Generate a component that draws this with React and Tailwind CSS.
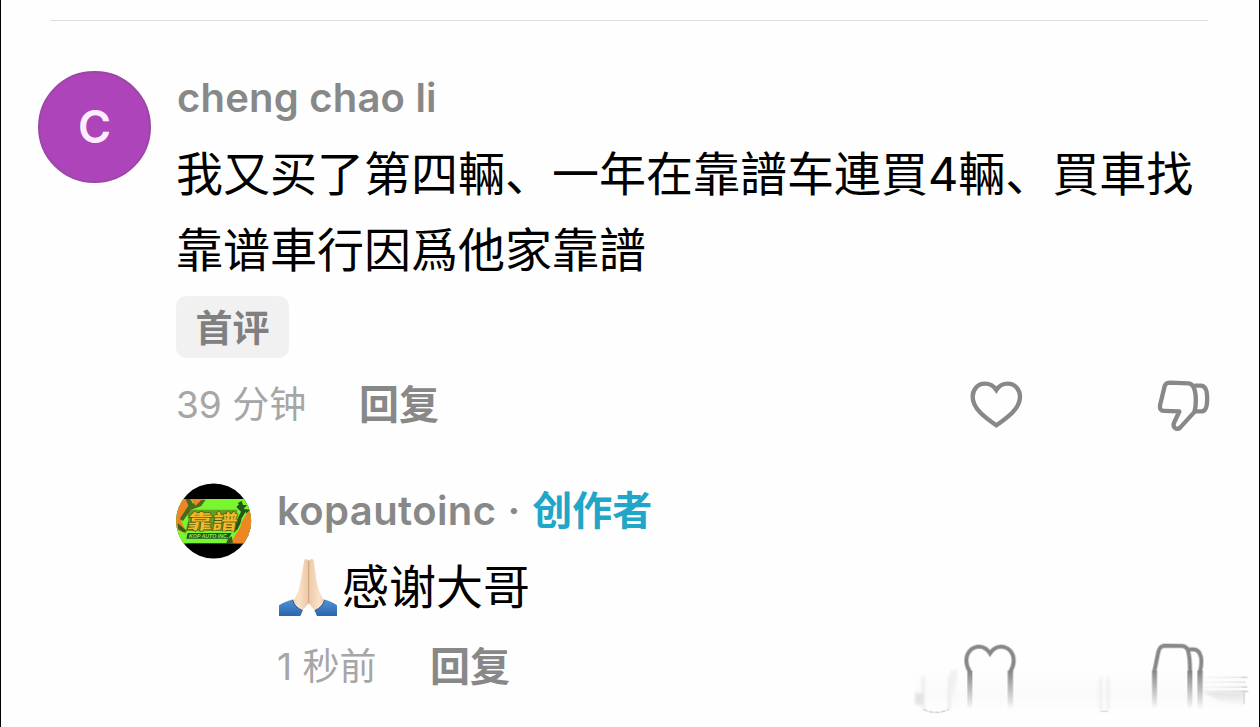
const CJK = "font-['Inter','Noto_Sans_CJK_SC',sans-serif]";

function HeartIcon() {
  return (
    <svg className="h-[50px] w-[53px]" viewBox="60 60 159 150" fill="none" stroke="#888" strokeWidth="13" strokeLinejoin="miter">
      <path d="M139 90C129 75 117 71 105 71C83 71 68 88 68 110C68 146 105 172 139 196C173 172 210 146 210 110C210 88 195 71 173 71C161 71 149 75 139 90Z" />
    </svg>
  );
}

function DislikeIcon() {
  return (
    <svg className="h-[53px] w-[55px]" viewBox="620 57 165 160" fill="none" stroke="#888" strokeWidth="13" strokeLinejoin="round" strokeLinecap="round">
      <path d="M643 153L690 155L674 189C668 204 683 213 693 203L735 157C741 140 742 100 733 82C730 75 726 71 718 70L662 68C654 68 649 70 646 77L632 135C630 147 634 153 643 153Z" />
      <path d="M738 77H755C770 77 774 95 774 117C774 137 770 155 756 155H738" />
    </svg>
  );
}

function PrayIcon() {
  return (
    <svg className="h-[60px] w-[60px] shrink-0" viewBox="26 24 180 180">
      <defs>
        <linearGradient id="skin" x1="0" x2="1">
          <stop offset="0" stopColor="#eac09c" />
          <stop offset=".25" stopColor="#fbe2c8" />
          <stop offset=".5" stopColor="#ecc7a4" />
          <stop offset=".75" stopColor="#fbe2c8" />
          <stop offset="1" stopColor="#e6b994" />
        </linearGradient>
        <linearGradient id="sleeve" x1="0" y1="0" x2="0" y2="1">
          <stop offset="0" stopColor="#4e93d6" />
          <stop offset="1" stopColor="#2c65ad" />
        </linearGradient>
      </defs>
      <path d="M105 29Q111 24 118 32Q126 23 133 30L142 95Q148 125 160 145L180 170L150 192L132 176L118 160L104 176L84 192L56 170L77 145Q88 126 93 98Z" fill="url(#skin)" />
      <path d="M118 32V160" stroke="#c49a78" strokeWidth="2.5" fill="none" />
      <path d="M29 166Q50 152 70 149Q73 170 100 182L93 198H29Z" fill="url(#sleeve)" />
      <path d="M203 166Q184 152 166 149Q162 170 136 182L143 198H203Z" fill="url(#sleeve)" />
      <path d="M70 149Q73 170 100 182M166 149Q162 170 136 182" stroke="#265391" strokeWidth="3" fill="none" />
    </svg>
  );
}

function ShopAvatar() {
  return (
    <svg className="mt-[13px] h-[76px] w-[76px] shrink-0" viewBox="33 40 228 228">
      <defs>
        <clipPath id="round"><circle cx="146" cy="154" r="112.5" /></clipPath>
      </defs>
      <g clipPath="url(#round)">
        <rect x="33" y="40" width="228" height="228" fill="#000" />
        <rect x="33" y="88" width="228" height="133" fill="#79f62f" />
        <path d="M33 88H62L84 106L48 150L64 190L52 221H33Z" fill="#ef8624" />
        <path d="M62 88H76L84 102L100 90H122L108 110L78 120L54 154L44 148L70 108Z" fill="#4a6a1c" />
        <path d="M78 88H112L92 108Z" fill="#ef8624" />
        <path d="M261 112L238 124L226 172L196 221H261Z" fill="#ef8624" />
        <path d="M214 112L222 104L218 100L230 94L234 106L246 106L236 118L256 120L240 134L218 178L206 190L216 150L228 126Z" fill="#24571a" />
        <path d="M242 126L244 134L226 164L230 146Z" fill="#79f62f" />
        <path d="M188 208L200 200L204 221H184Z" fill="#3b5a1c" />
        <path d="M38 160L66 184L56 190L40 178Z" fill="#3b5a1c" />
        <path d="M38 180L60 190L66 221H44Z" fill="#79f62f" />
        <path d="M66 128L80 120H218L212 134L216 150L206 184H62L70 150Z" fill="#4a5a10" opacity=".55" />
        <text x="68" y="176" fontSize="68" fontWeight="700" fill="#f4b92c" stroke="#4a5a10" strokeWidth="4" paintOrder="stroke" textLength="150" lengthAdjust="spacingAndGlyphs" className="font-['Noto_Sans_CJK_TC',sans-serif]" transform="matrix(1 0 -.12 .88 18 22)">靠譜</text>
        <path d="M68 190H200L190 207H64Z" fill="#16572b" />
        <text x="72" y="205" fontSize="18" fontWeight="700" fontStyle="italic" fill="#a4e83c" textLength="118" lengthAdjust="spacingAndGlyphs" className="font-['Liberation_Sans',sans-serif]">KOP AUTO INC.</text>
      </g>
    </svg>
  );
}

function FadedActions() {
  return (
    <svg className="absolute bottom-0 right-[-1px] h-[97px] w-[360px]" viewBox="0 0 1080 291" fill="none">
      <defs>
        <linearGradient id="fade" gradientUnits="userSpaceOnUse" x1="0" y1="122" x2="0" y2="238">
          <stop offset="0" stopColor="#858585" />
          <stop offset=".45" stopColor="#858585" stopOpacity=".55" />
          <stop offset="1" stopColor="#858585" stopOpacity="0" />
        </linearGradient>
        <linearGradient id="haze" gradientUnits="userSpaceOnUse" x1="905" y1="0" x2="1040" y2="0">
          <stop offset="0" stopColor="#ddd" stopOpacity=".15" />
          <stop offset="1" stopColor="#c4c4c4" stopOpacity=".75" />
        </linearGradient>
        <linearGradient id="wedge" gradientUnits="userSpaceOnUse" x1="0" y1="184" x2="0" y2="235">
          <stop offset="0" stopColor="#ccc" stopOpacity=".6" />
          <stop offset="1" stopColor="#ddd" stopOpacity="0" />
        </linearGradient>
        <linearGradient id="band" x1="0" x2="0" y1="0" y2="1">
          <stop offset="0" stopColor="#eee" stopOpacity="0" />
          <stop offset=".6" stopColor="#e8e8e8" stopOpacity=".2" />
          <stop offset="1" stopColor="#eee" stopOpacity="0" />
        </linearGradient>
        <filter id="soft" x="-20%" y="-20%" width="140%" height="140%"><feGaussianBlur stdDeviation="4" /></filter>
      </defs>
      <rect x="45" y="120" width="990" height="125" fill="url(#band)" />
      <g filter="url(#soft)">
        <path d="M70 140V238M148 140V238" stroke="#ccc" strokeWidth="6" opacity=".45" />
        <path d="M45 190H68V224H45Z" fill="#ccc" opacity=".5" />
        <path d="M150 120H175L158 205Z" fill="#ddd" opacity=".4" />
        <path d="M602 140V242M624 140V242" stroke="#ddd" strokeWidth="5" opacity=".7" />
        <path d="M912 186H1032V228L960 212Z" fill="url(#wedge)" />
      </g>
      <path d="M70 238Q106 256 147 238" stroke="#b5b5b5" strokeWidth="3" strokeDasharray="14 4" />
      <path d="M602 244H624" stroke="#ccc" strokeWidth="3" />
      <path d="M905 142L1042 142.1M905 156L1036 156.1M905 171L1042 171.1M905 184L1045 184.1" stroke="url(#haze)" strokeWidth="3" />
      <path d="M1027 142H1042M1027 171H1042M1027 184H1045M1032 186V222" stroke="#c8c8c8" strokeWidth="3" />
      <path d="M202 122H217V238H202ZM323 122H339V238H323ZM756 122H771V238H756ZM862 122H877V238H862ZM892 122H908V238H892Z" fill="url(#fade)" />
      <g stroke="#888" strokeWidth="12">
        <path d="M209 124C202 113 199 103 199 92C199 67 216 50 237 50C251 50 262 57 270 70C278 57 289 50 303 50C324 50 341 67 341 92C341 103 338 113 331 124" />
        <path d="M763 124L775 65C778 52 783 48 793 47L846 48C857 49 861 53 864 62C869 80 870 102 870 124" />
        <path d="M866 58H882C896 58 904 75 904 94C904 106 903 114 900 124" />
      </g>
    </svg>
  );
}

function Meta({ time, timeClass }) {
  return (
    <div className="flex items-center whitespace-nowrap">
      <span className={`leading-[50px] text-[#a6a6a6] ${timeClass}`}>{time}</span>
      <button className="text-[40px] font-bold leading-[50px] text-[#888]">回复</button>
    </div>
  );
}

export default function App() {
  return (
    <main className={`relative flex h-[727px] w-[1260px] flex-col overflow-hidden border-x border-black bg-[#fefefe] ${CJK}`}>
      <hr className="ml-[49px] mt-[20px] w-[1158px] border-t border-[#dcdedd]" />
      <article className="ml-[37px] mt-[50px] flex">
        <div className="flex h-[112px] w-[113px] shrink-0 items-center justify-center rounded-full border-2 border-[#9c47a8] bg-[#ad44ba] text-[45px] font-semibold text-[#fdeeff]">C</div>
        <div className="ml-[25px] w-[1035px]">
          <h2 className="h-[65px] whitespace-nowrap pl-px text-[40px] font-semibold leading-[53px] tracking-[0.2px] text-[#888]">cheng chao li</h2>
          <p className="whitespace-nowrap text-[47px] leading-[76px] text-black">
            我又买了第四輛、一年在靠譜车連買4輛、買車找<br />靠谱車行因爲他家靠譜
          </p>
          <div className="mt-[8px] flex h-[62px] w-[113px] items-center justify-center rounded-[10px] bg-[#f1f1f1] pt-[3px] text-[37px] font-bold text-[#808080]">首评</div>
          <div className="mt-[20px] flex h-[54px] items-center">
            <Meta time="39 分钟" timeClass="w-[183px] text-[37px]" />
            <div className="ml-auto flex items-center gap-[133px]">
              <HeartIcon />
              <DislikeIcon />
            </div>
          </div>
          <section className="mt-[38px] flex">
            <ShopAvatar />
            <div className="ml-[25px] mt-[9px]">
              <div className="flex h-[64px] items-center whitespace-nowrap text-[40px] font-semibold text-[#888]">
                <span className="tracking-[0.4px]">kopautoinc</span>
                <span className="ml-[11px]">·</span>
                <span className="ml-[12px] font-bold text-[#20a6c8]">创作者</span>
              </div>
              <div className="mt-[8px] flex h-[72px] items-center text-[47px] leading-[72px] text-black">
                <div className="pl-px pt-[1px]"><PrayIcon /></div>
                <span className="ml-[4px]">感谢大哥</span>
              </div>
              <div className="mt-[19px]">
                <Meta time="1 秒前" timeClass="w-[153px] text-[37px]" />
              </div>
            </div>
          </section>
        </div>
      </article>
      <FadedActions />
    </main>
  );
}
